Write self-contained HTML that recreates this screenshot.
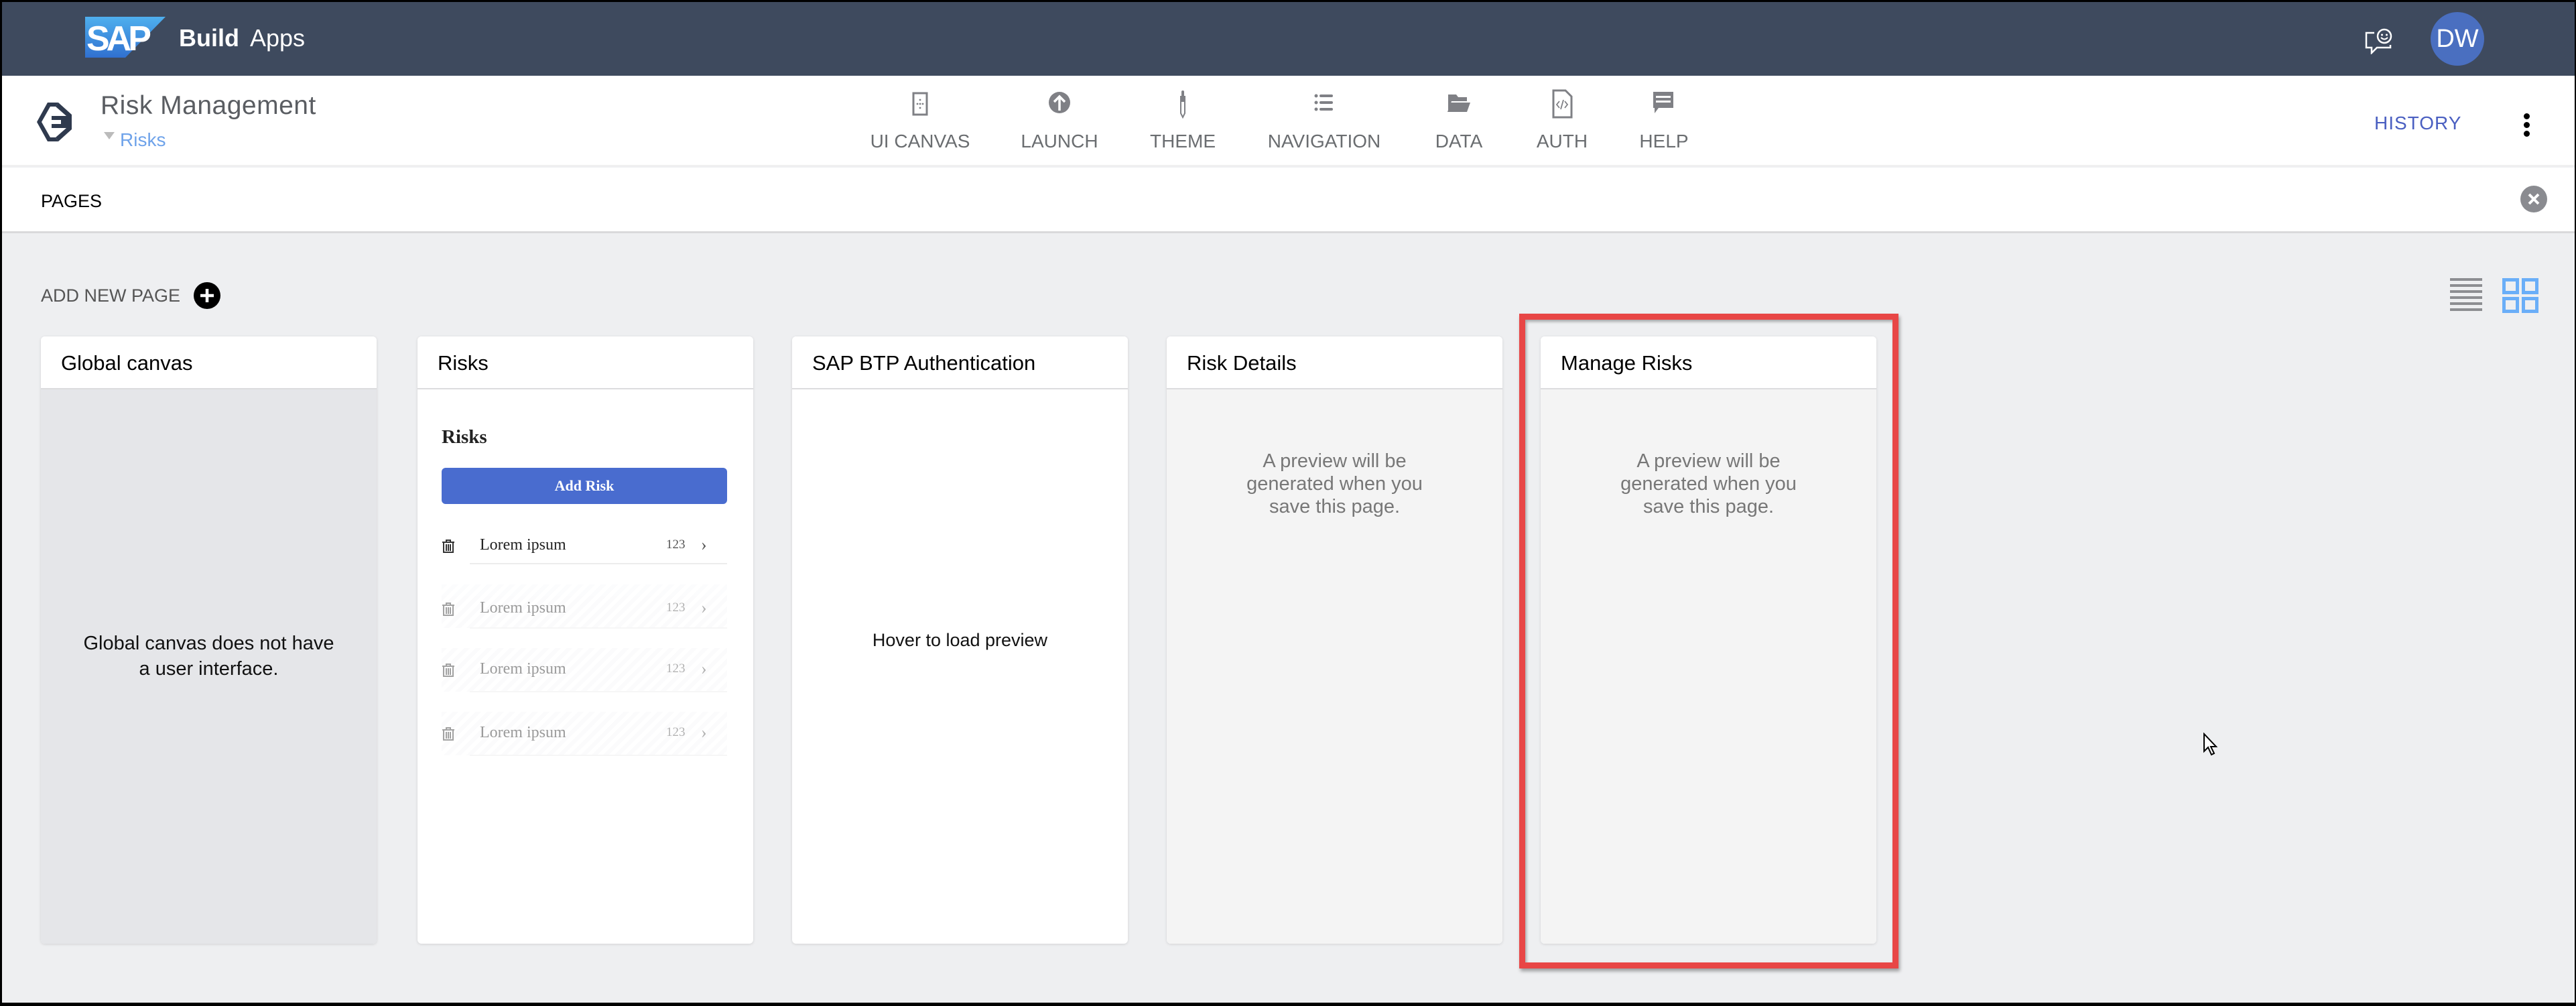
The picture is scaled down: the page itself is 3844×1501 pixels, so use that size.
<!DOCTYPE html>
<html><head><meta charset="utf-8"><style>
*{margin:0;padding:0;box-sizing:border-box}
body{width:3844px;height:1501px;overflow:hidden;background:#000;font-family:"Liberation Sans",Arial,sans-serif;position:relative}
.frame{position:absolute;left:3px;top:3px;width:3839px;height:1493px;background:#eeeff1;overflow:hidden}
.abs{position:absolute}
.top{left:0;top:0;width:100%;height:110px;background:#3e4a5e}
.bar2{left:0;top:110px;width:100%;height:135px;background:#fff;border-bottom:2px solid #f0f0f0}
.bar3{left:0;top:247px;width:100%;height:98px;background:#fff;border-bottom:3px solid #d9d9db}
.nav{top:130px;width:200px;text-align:center;font-size:28px;color:#6a6d70}
.nav svg{display:block;margin:0 auto 18px;height:44px}
.card{top:499px;width:501px;height:906px;background:#fff;border-radius:6px;box-shadow:0 1px 4px rgba(0,0,0,.12);overflow:hidden}
.card .h{height:79px;border-bottom:2px solid #dcdcde;font-size:31px;padding:22px 0 0 30px;color:#000;background:#fff}
.card .b{position:absolute;left:0;top:79px;right:0;bottom:0}
.prev{position:absolute;left:0;right:0;top:90px;text-align:center;font-size:29px;line-height:34px;color:#777}
.row{position:absolute;left:36px;width:426px;height:80px;font-family:"Liberation Serif",serif;font-size:24px;color:#222}
.row .t{position:absolute;left:57px;top:14px}
.row .n{position:absolute;left:335px;top:16px;font-size:19px;color:#555}
.row .c{position:absolute;left:387px;top:12px;font-size:26px;color:#555}
.row .ln{position:absolute;left:42px;right:0;top:50px;height:2px;background:#ececec}
.fade{opacity:.45;background:repeating-linear-gradient(135deg,#f7f8fa 0 6px,#fff 6px 12px)}
</style></head><body>
<div class="frame">
<div class="abs top">
  <svg class="abs" style="left:124px;top:22px" width="120" height="61" viewBox="0 0 120 61"><defs><linearGradient id="g" x1="0" y1="0" x2="0" y2="1"><stop offset="0" stop-color="#4fb0ee"/><stop offset="1" stop-color="#3070d0"/></linearGradient></defs><path d="M0 0H120L60 61H0Z" fill="url(#g)"/><text x="2" y="50" font-family="Liberation Sans" font-weight="bold" font-size="52" fill="#fff" letter-spacing="-5">SAP</text></svg>
  <div class="abs" style="left:264px;top:33px;font-size:36px;font-weight:bold;color:#fff">Build</div>
  <div class="abs" style="left:370px;top:33px;font-size:36px;color:#fff">Apps</div>
  <svg class="abs" style="left:3524px;top:38px" width="44" height="40" viewBox="0 0 44 40"><path d="M16 8H4v22h8v8l8-8h20v-4" fill="none" stroke="#fff" stroke-width="2.5"/><circle cx="31" cy="13" r="10" fill="none" stroke="#fff" stroke-width="2.5"/><circle cx="27.5" cy="11" r="1.5" fill="#fff"/><circle cx="34.5" cy="11" r="1.5" fill="#fff"/><path d="M26 15q5 5 10 0" fill="none" stroke="#fff" stroke-width="2"/></svg>
  <div class="abs" style="left:3624px;top:15px;width:80px;height:80px;border-radius:50%;background:#4a6fc0;color:#fff;font-size:38px;text-align:center;line-height:80px">DW</div>
</div>
<div class="abs bar2">
  <svg class="abs" style="left:50px;top:38px" width="56" height="62" viewBox="0 0 56 62"><path d="M18 2L2 31L18 60H34L30 54H22L9 31L22 8H30L34 2Z" fill="#2f3a4e"/><path d="M34 2L54 20V42L34 60L30 54L46 40V22L30 8Z" fill="#2f3a4e"/><path d="M24 22H46V40H24V34H38V28H24Z" fill="#2f3a4e"/></svg>
  <div class="abs" style="left:147px;top:23px;font-size:39px;color:#5a5d62;letter-spacing:0.5px">Risk Management</div>
  <div class="abs" style="left:152px;top:84px;width:0;height:0;border-left:8px solid transparent;border-right:8px solid transparent;border-top:11px solid #bbb"></div>
  <div class="abs" style="left:176px;top:80px;font-size:28px;color:#6fa3ea">Risks</div>
  <div class="abs" style="left:3540px;top:55px;font-size:28px;color:#4a5fc1;letter-spacing:1px">HISTORY</div>
  <div class="abs" style="left:3763px;top:56px;width:9px">
    <div style="width:9px;height:9px;border-radius:50%;background:#000;margin-bottom:4px"></div><div style="width:9px;height:9px;border-radius:50%;background:#000;margin-bottom:4px"></div><div style="width:9px;height:9px;border-radius:50%;background:#000"></div></div>
</div>
<div class="abs nav" style="left:1270px"><svg viewBox="0 0 44 44" width="44"><rect x="12" y="6" width="20" height="32" fill="none" stroke="#7f8085" stroke-width="3"/><circle cx="22" cy="16" r="1.4" fill="#7f8085"/><circle cx="18" cy="22" r="1.4" fill="#7f8085"/><circle cx="22" cy="22" r="1.4" fill="#7f8085"/><circle cx="26" cy="22" r="1.4" fill="#7f8085"/><circle cx="22" cy="28" r="1.4" fill="#7f8085"/></svg>UI CANVAS</div>
<div class="abs nav" style="left:1478px"><svg viewBox="0 0 44 44" width="44"><circle cx="22" cy="20" r="16" fill="#7f8085"/><path d="M22 32V11M14 19l8-8 8 8" stroke="#fff" stroke-width="3.5" fill="none"/></svg>LAUNCH</div>
<div class="abs nav" style="left:1662px"><svg viewBox="0 0 44 44" width="44"><rect x="18" y="10" width="8" height="8" fill="#7f8085"/><rect x="20" y="2" width="4" height="10" rx="2" fill="#7f8085"/><path d="M19 18h6v18l-3 6-3-6z" fill="none" stroke="#7f8085" stroke-width="2"/></svg>THEME</div>
<div class="abs nav" style="left:1873px"><svg viewBox="0 0 44 44" width="44"><g fill="#7f8085"><circle cx="10" cy="10" r="2.5"/><circle cx="10" cy="20" r="2.5"/><circle cx="10" cy="30" r="2.5"/><rect x="15" y="8" width="20" height="4" rx="2"/><rect x="15" y="18" width="20" height="4" rx="2"/><rect x="15" y="28" width="20" height="4" rx="2"/></g></svg>NAVIGATION</div>
<div class="abs nav" style="left:2074px"><svg viewBox="0 0 44 44" width="44"><path d="M6 8h12l3 4h13v6H11L6 32z" fill="#7f8085"/><path d="M10 20h29l-5 14H5z" fill="#7f8085"/></svg>DATA</div>
<div class="abs nav" style="left:2228px"><svg viewBox="0 0 44 44" width="44"><path d="M9 2h18l9 9v31H9z" fill="none" stroke="#7f8085" stroke-width="3"/><path d="M18 18l-4 5 4 5M26 18l4 5-4 5M24 16l-4 14" stroke="#7f8085" stroke-width="1.8" fill="none"/></svg>AUTH</div>
<div class="abs nav" style="left:2380px"><svg viewBox="0 0 44 44" width="44"><path d="M6 4h30v24H14l-6 8v-8H6z" fill="#7f8085"/><rect x="10" y="10" width="22" height="3" fill="#fff"/><rect x="10" y="17" width="22" height="3" fill="#fff"/></svg>HELP</div>
<div class="abs bar3">
  <div class="abs" style="left:58px;top:35px;font-size:27px;color:#000">PAGES</div>
  <div class="abs" style="left:3758px;top:27px;width:40px;height:40px;border-radius:50%;background:#8a8b90"><svg width="40" height="40"><path d="M13 13L27 27M27 13L13 27" stroke="#fff" stroke-width="4"/></svg></div>
</div>
<div class="abs" style="left:58px;top:423px;font-size:27px;color:#555">ADD NEW PAGE</div>
<div class="abs" style="left:286px;top:418px;width:40px;height:40px;border-radius:50%;background:#000"><svg width="40" height="40"><path d="M20 10V30M10 20H30" stroke="#fff" stroke-width="4.5"/></svg></div>
<svg class="abs" style="left:3653px;top:412px" width="48" height="52"><g fill="#8d8e92"><rect y="0" width="48" height="4"/><rect y="9" width="48" height="4"/><rect y="18" width="48" height="4"/><rect y="27" width="48" height="4"/><rect y="36" width="48" height="4"/><rect y="45" width="48" height="4"/></g></svg>
<svg class="abs" style="left:3731px;top:412px" width="54" height="52"><g fill="none" stroke="#6aaef8" stroke-width="5"><rect x="2.5" y="2.5" width="20" height="19"/><rect x="31.5" y="2.5" width="20" height="19"/><rect x="2.5" y="30.5" width="20" height="19"/><rect x="31.5" y="30.5" width="20" height="19"/></g></svg>

<div class="abs card" style="left:58px"><div class="h">Global canvas</div><div class="b" style="background:#e5e6e9"><div class="prev" style="top:360px;color:#111;font-size:29px;line-height:38px">Global canvas does not have<br>a user interface.</div></div></div>

<div class="abs card" style="left:620px"><div class="h">Risks</div><div class="b">
  <div class="abs" style="left:36px;top:55px;font-family:'Liberation Serif',serif;font-weight:bold;font-size:29px;color:#222">Risks</div>
  <div class="abs" style="left:36px;top:117px;width:426px;height:54px;background:#496ccf;border-radius:6px;color:#fff;font-family:'Liberation Serif',serif;font-weight:bold;font-size:22px;text-align:center;line-height:54px">Add Risk</div>
  <div class="row" style="top:205px"><svg class="abs" style="left:0;top:18px" width="20" height="22"><path d="M1 5h18M7 5V2h6v3M3 5v15h14V5M7 8v10M10 8v10M13 8v10" fill="none" stroke="#333" stroke-width="2"/></svg><span class="t">Lorem ipsum</span><span class="n">123</span><span class="c">›</span><div class="ln" style="top:54px"></div></div>
  <div class="row fade" style="top:291px;height:65px"><svg class="abs" style="left:0;top:26px" width="20" height="22"><path d="M1 5h18M7 5V2h6v3M3 5v15h14V5M7 8v10M10 8v10M13 8v10" fill="none" stroke="#333" stroke-width="2"/></svg><span class="t" style="top:22px">Lorem ipsum</span><span class="n" style="top:24px">123</span><span class="c" style="top:20px">›</span><div class="ln" style="top:64px"></div></div>
  <div class="row fade" style="top:386px;height:65px"><svg class="abs" style="left:0;top:22px" width="20" height="22"><path d="M1 5h18M7 5V2h6v3M3 5v15h14V5M7 8v10M10 8v10M13 8v10" fill="none" stroke="#333" stroke-width="2"/></svg><span class="t" style="top:18px">Lorem ipsum</span><span class="n" style="top:20px">123</span><span class="c" style="top:16px">›</span><div class="ln" style="top:64px"></div></div>
  <div class="row fade" style="top:481px;height:65px"><svg class="abs" style="left:0;top:22px" width="20" height="22"><path d="M1 5h18M7 5V2h6v3M3 5v15h14V5M7 8v10M10 8v10M13 8v10" fill="none" stroke="#333" stroke-width="2"/></svg><span class="t" style="top:18px">Lorem ipsum</span><span class="n" style="top:20px">123</span><span class="c" style="top:16px">›</span><div class="ln" style="top:64px"></div></div>
</div></div>

<div class="abs card" style="left:1179px"><div class="h">SAP BTP Authentication</div><div class="b"><div class="prev" style="top:357px;color:#111;font-size:27px">Hover to load preview</div></div></div>

<div class="abs card" style="left:1738px"><div class="h">Risk Details</div><div class="b" style="background:#f4f4f4"><div class="prev">A preview will be<br>generated when you<br>save this page.</div></div></div>

<div class="abs card" style="left:2296px"><div class="h">Manage Risks</div><div class="b" style="background:#f4f4f4"><div class="prev">A preview will be<br>generated when you<br>save this page.</div></div></div>

<div class="abs" style="left:2264px;top:465px;width:566px;height:977px;border:9px solid #e84646;box-shadow:2px 4px 5px rgba(0,0,0,.35), inset 2px 3px 4px rgba(0,0,0,.3)"></div>

<svg class="abs" style="left:3284px;top:1090px" width="26" height="36"><path d="M2 2V28L8 22L13 33L17 31L12 21H20Z" fill="#fff" stroke="#000" stroke-width="2"/></svg>
</div>
</body></html>
